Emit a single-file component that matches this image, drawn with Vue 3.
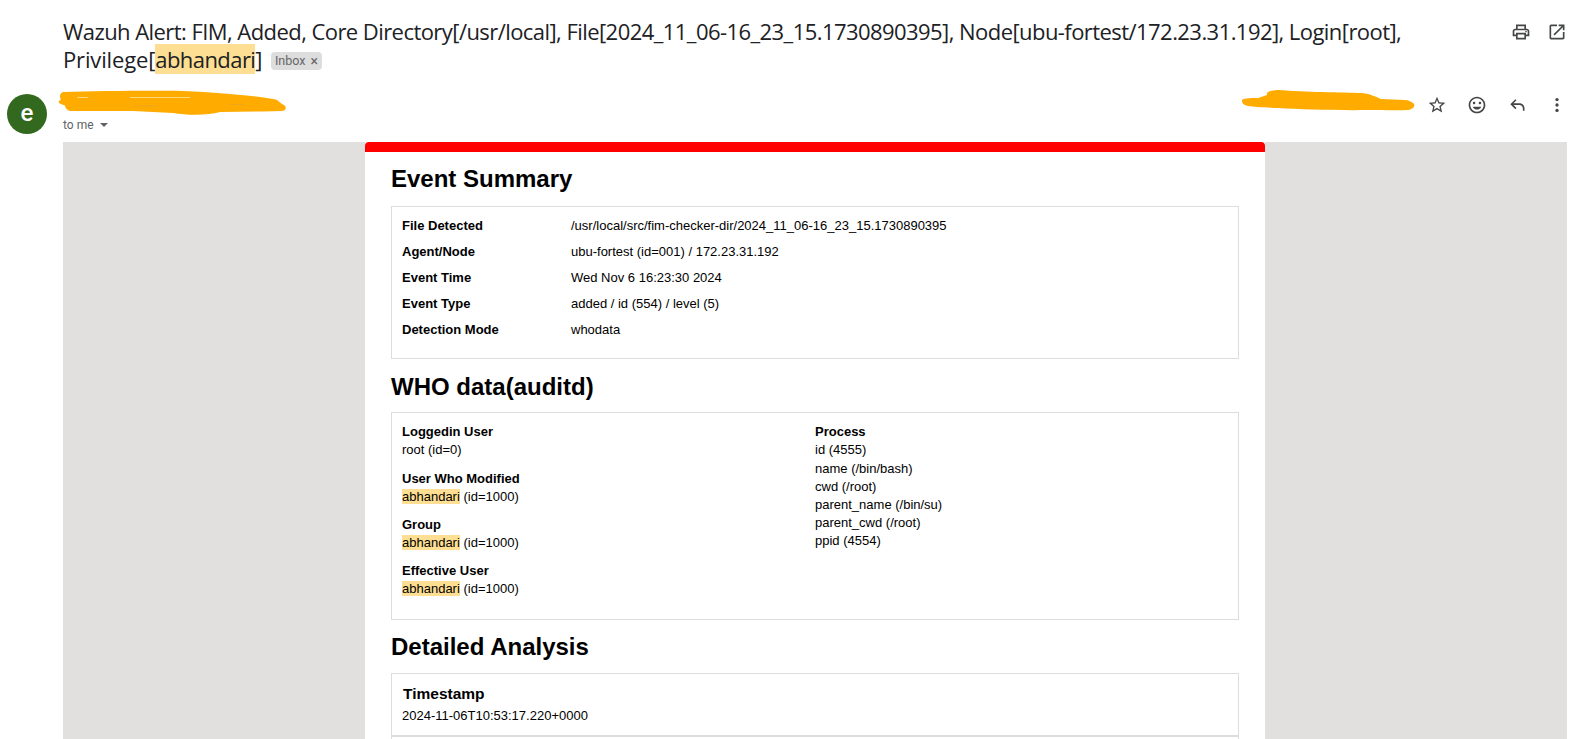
<script setup>
const summary = [
  ['File Detected', '/usr/local/src/fim-checker-dir/2024_11_06-16_23_15.1730890395'],
  ['Agent/Node', 'ubu-fortest (id=001) / 172.23.31.192'],
  ['Event Time', 'Wed Nov 6 16:23:30 2024'],
  ['Event Type', 'added / id (554) / level (5)'],
  ['Detection Mode', 'whodata'],
]
const users = [
  { label: 'Loggedin User', plain: 'root (id=0)' },
  { label: 'User Who Modified', mark: 'abhandari', plain: ' (id=1000)' },
  { label: 'Group', mark: 'abhandari', plain: ' (id=1000)' },
  { label: 'Effective User', mark: 'abhandari', plain: ' (id=1000)' },
]
const proc = ['id (4555)', 'name (/bin/bash)', 'cwd (/root)', 'parent_name (/bin/su)', 'parent_cwd (/root)', 'ppid (4554)']
</script>

<template>
  <div class="page">
    <div class="subject-row">
      <h1 class="subject">Wazuh Alert: FIM, Added, Core Directory[/usr/local], File[2024_11_06-16_23_15.1730890395], Node[ubu-fortest/172.23.31.192], Login[root], <span class="priv">Privilege[</span><span class="hl">abhandari</span>]<span class="chip">Inbox<span class="chip-x">×</span></span></h1>
      <div class="icons top-icons">
        <svg class="icon" viewBox="0 0 24 24"><path d="M19 8h-1V3H6v5H5c-1.66 0-3 1.34-3 3v6h4v4h12v-4h4v-6c0-1.66-1.34-3-3-3zM8 5h8v3H8V5zm8 12v2H8v-4h8v2zm2-2v-2H6v2H4v-4c0-.55.45-1 1-1h14c.55 0 1 .45 1 1v4h-2z"/><circle cx="18" cy="11.5" r="1"/></svg>
        <svg class="icon" viewBox="0 0 24 24"><path d="M19 19H5V5h7V3H5c-1.11 0-2 .9-2 2v14c0 1.1.89 2 2 2h14c1.1 0 2-.9 2-2v-7h-2v7zM14 3v2h3.59l-9.83 9.83 1.41 1.41L19 6.41V10h2V3h-7z"/></svg>
      </div>
    </div>

    <div class="sender-row">
      <div class="avatar">e</div>
      <div class="sender">
        <svg class="scribble-left" width="232" height="26" viewBox="0 0 232 26">
          <path d="M5 1C40 0 90 -.5 125 0C170 2 210 6 219 9L224 13C229 15 229 19 224 20L205 20.500L162 21C150 24.500 130 24.500 115 22L75 20L12 20C8 18.500 7 16 7 14.500C0 13 -1 10 3 9C1 6 2 2 5 1Z" fill="#ffab00"/>
          <path d="M19 6.500H30M72 6.500H132" stroke="#ffe9b0" stroke-width=".7" fill="none"/>
          <path d="M76 15H100M172 13.500H186" stroke="#d8a53a" stroke-width=".5" fill="none"/>
        </svg>
        <div class="to">to me<span class="caret"></span></div>
      </div>
      <div class="sender-right">
        <svg class="scribble-right" width="174" height="22" viewBox="0 0 174 22">
          <path d="M1 10.500C1 8.500 8 8 17 8L26 5C25 2 28 .5 37 0C65 2 100 2.500 121 3C130 4 135 7 140 9L164 10C168 10 170 12 172 13C175 15 173 19 167 20C155 20.500 140 20 127 20C100 20.500 60 19.500 37 18C25 17.500 12 17 7 16C3 15 .5 13 1 10.500Z" fill="#ffab00"/>
        </svg>
        <div class="icons msg-icons">
          <svg class="icon" viewBox="0 0 24 24"><path d="M22 9.240l-7.190-.62L12 2 9.190 8.630 2 9.240l5.460 4.730L5.820 21 12 17.270 18.180 21l-1.630-7.030L22 9.240zM12 15.400l-3.760 2.270 1-4.280-3.320-2.880 4.380-.38L12 6.100l1.710 4.040 4.380.38-3.320 2.880 1 4.280L12 15.400z"/></svg>
          <svg class="icon" viewBox="0 0 24 24"><path d="M11.990 2C6.470 2 2 6.480 2 12s4.470 10 9.990 10C17.520 22 22 17.520 22 12S17.520 2 11.990 2zM12 20c-4.420 0-8-3.580-8-8s3.580-8 8-8 8 3.580 8 8-3.580 8-8 8zm3.500-9c.83 0 1.500-.67 1.500-1.500S16.330 8 15.500 8 14 8.670 14 9.500s.67 1.500 1.500 1.500zm-7 0c.83 0 1.500-.67 1.500-1.500S9.330 8 8.500 8 7 8.670 7 9.500 7.670 11 8.500 11zm3.500 6.500c2.330 0 4.310-1.460 5.110-3.500H6.890c.8 2.040 2.780 3.500 5.110 3.500z"/></svg>
          <svg class="icon" viewBox="0 0 24 24"><path d="M21 19h-2v-3c0-2.200-1.800-4-4-4H7.830l3.580 3.590L10 17l-6-6 6-6 1.410 1.410L7.830 10H15c3.310 0 6 2.690 6 6v3z"/></svg>
          <svg class="icon" viewBox="0 0 24 24"><circle cx="12" cy="5.500" r="2"/><circle cx="12" cy="12" r="2"/><circle cx="12" cy="18.500" r="2"/></svg>
        </div>
      </div>
    </div>

    <div class="backdrop">
      <div class="card">
        <div class="bar"></div>
        <div class="card-body">
          <h2 class="h-first">Event Summary</h2>
          <div class="box summary">
            <div v-for="r in summary" :key="r[0]" class="row">
              <b class="k">{{ r[0] }}</b><span>{{ r[1] }}</span>
            </div>
          </div>

          <h2 class="h-who">WHO data(auditd)</h2>
          <div class="box who">
            <div class="col-left">
              <div v-for="u in users" :key="u.label" class="grp">
                <b>{{ u.label }}</b>
                <div><span v-if="u.mark" class="hl">{{ u.mark }}</span>{{ u.plain }}</div>
              </div>
            </div>
            <div class="col-right">
              <b>Process</b>
              <div v-for="p in proc" :key="p" class="p-line">{{ p }}</div>
            </div>
          </div>

          <h2 class="h-det">Detailed Analysis</h2>
          <div class="box detail">
            <div class="d-row">
              <div class="d-title">Timestamp</div>
              <div class="d-val">2024-11-06T10:53:17.220+0000</div>
            </div>
            <div class="d-row d-next"></div>
          </div>
        </div>
      </div>
    </div>
  </div>
</template>

<style scoped>
.page {
  height: 739px;
  overflow: hidden;
  background: #fff;
  font-family: Roboto, "Liberation Sans", sans-serif;
  color: #202124;
}
.subject-row {
  display: flex;
  justify-content: space-between;
  padding: 17px 7px 0 63px;
  height: 73px;
}
.subject {
  margin: 0;
  width: 1420px;
  font-family: "Open Sans", Roboto, sans-serif;
  font-weight: 400;
  font-size: 22px;
  line-height: 28px;
  letter-spacing: -0.56px;
  color: #202124;
}
.priv { letter-spacing: -0.15px; }
.hl { background: #fdde92; }
.chip {
  display: inline-flex;
  align-items: center;
  height: 18px;
  margin-left: 9px;
  padding: 0 4px;
  border-radius: 4px;
  background: #dddddd;
  color: #666;
  font-family: Roboto, sans-serif;
  font-size: 12.500px;
  letter-spacing: 0;
  line-height: 18px;
  vertical-align: 3px;
}
.chip-x { margin-left: 5px; font-size: 14px; }
.icons { display: flex; }
.top-icons { gap: 16px; margin-top: 5px; }
.msg-icons { gap: 20px; margin-top: 5px; }
.icon { width: 20px; height: 20px; fill: #444746; display: block; }
.sender-row {
  display: flex;
  height: 52px;
  padding-left: 7px;
}
.avatar {
  width: 40px;
  height: 40px;
  margin-top: 4px;
  border-radius: 50%;
  background: #33691e;
  color: #fff;
  font-size: 24px;
  font-weight: 500;
  line-height: 38px;
  text-align: center;
  font-family: Roboto, sans-serif;
}
.sender { margin-left: 11px; padding-top: 1px; }
.scribble-left { display: block; overflow: visible; }
.to {
  margin-left: 5px;
  margin-top: 0;
  font-size: 12px;
  line-height: 16px;
  color: #5f6368;
  display: flex;
  align-items: center;
}
.caret {
  width: 0;
  height: 0;
  margin-left: 6px;
  border-left: 4px solid transparent;
  border-right: 4px solid transparent;
  border-top: 4px solid #5f6368;
}
.sender-right {
  display: flex;
  margin-left: auto;
  padding-right: 7px;
}
.scribble-right { margin-right: 12px; display: block; overflow: visible; }
.backdrop {
  display: flex;
  justify-content: center;
  margin: 0 7px 0 63px;
  background: #e1e0de;
  min-height: 597px;
}
.card {
  width: 900px;
  background: #fff;
  font-family: "Liberation Sans", Arial, sans-serif;
  font-size: 13px;
  color: #000;
}
.bar { height: 10px; background: #f00; border-radius: 4px 4px 0 0; }
.card-body { padding: 0 26px; }
h2 {
  margin: 0;
  font-size: 24px;
  line-height: 28px;
  font-weight: 700;
  color: #000;
}
.h-first { margin-top: 13px; margin-bottom: 13px; }
.h-who { margin-top: 14px; margin-bottom: 11px; }
.h-det { margin-top: 13px; margin-bottom: 12px; }
.box { border: 1px solid #ddd; }
.summary { padding: 5px 10px 16px; }
.row { display: flex; height: 26px; align-items: center; }
.k { width: 169px; flex: none; }
.who {
  display: grid;
  grid-template-columns: 413px 1fr;
  padding: 10px 0 21px 10px;
  line-height: 18px;
}
.grp { margin-bottom: 10px; }
.grp:first-child { margin-bottom: 11px; }
.grp:last-child { margin-bottom: 0; }
.col-right b { display: block; }
.p-line:nth-of-type(1) { margin-bottom: 1px; }
.detail { min-height: 80px; }
.d-row { padding: 10px 10px 9px; }
.d-next { border-top: 2px solid #ddd; }
.d-title { font-size: 15.500px; font-weight: 700; line-height: 20px; padding-left: 1px; }
.d-val { line-height: 20px; margin-top: 2px; }
</style>
